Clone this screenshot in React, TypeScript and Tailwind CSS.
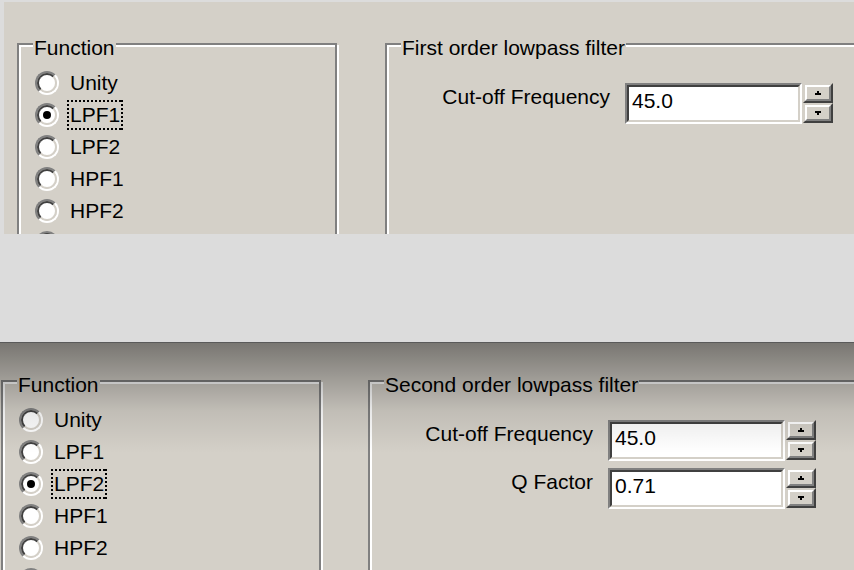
import React from "react";

const items = ["Unity", "LPF1", "LPF2", "HPF1", "HPF2", ""];

function Radio({ checked }: { checked: boolean }) {
  return (
    <div className="w-[24px] h-[24px] shrink-0 rounded-full border-2 border-t-[#808080] border-l-[#808080] border-b-white border-r-white">
      <div className="w-full h-full rounded-full border-2 border-t-[#404040] border-l-[#404040] border-b-[#d4d0c8] border-r-[#d4d0c8] bg-white flex items-center justify-center">
        {checked && <div className="w-[8px] h-[8px] rounded-full bg-black" />}
      </div>
    </div>
  );
}

function FocusRect() {
  return (
    <span className="pointer-events-none absolute inset-0">
      <span className="absolute left-0 right-0 top-0 h-[2px] bg-[repeating-linear-gradient(90deg,#000_0_2px,transparent_2px_4px)]" />
      <span className="absolute left-0 right-0 bottom-0 h-[2px] bg-[repeating-linear-gradient(90deg,#000_0_2px,transparent_2px_4px)]" />
      <span className="absolute top-0 bottom-0 left-0 w-[2px] bg-[repeating-linear-gradient(180deg,#000_0_2px,transparent_2px_4px)]" />
      <span className="absolute top-0 bottom-0 right-0 w-[2px] bg-[repeating-linear-gradient(180deg,#000_0_2px,transparent_2px_4px)]" />
    </span>
  );
}

function GroupBox({
  title,
  className,
  children,
}: {
  title: string;
  className: string;
  children: React.ReactNode;
}) {
  return (
    <div
      className={
        "relative shrink-0 border-2 border-[#808080] shadow-[inset_2px_2px_0_#fff,2px_2px_0_#fff] " +
        className
      }
    >
      <span className="absolute left-[14px] top-[-9px] bg-[#d4d0c8] px-[1px] leading-[24px] whitespace-nowrap">
        {title}
      </span>
      {children}
    </div>
  );
}

function FunctionGroup({ selected, className }: { selected: string; className: string }) {
  return (
    <GroupBox title="Function" className={className}>
      <div className="flex flex-col pt-[22px] pl-[16px]">
        {items.map((it, i) => (
          <div key={i} className="flex items-center h-[32px]">
            <Radio checked={it === selected} />
            {it && (
              <span className="relative ml-[8px] flex h-[30px] items-center px-[3px] leading-[24px]">
                {it}
                {it === selected && <FocusRect />}
              </span>
            )}
          </div>
        ))}
      </div>
    </GroupBox>
  );
}

function Arrow({ up }: { up: boolean }) {
  return (
    <svg width="6" height="4" viewBox="0 0 6 4" shapeRendering="crispEdges">
      {up ? (
        <>
          <rect x="2" y="0" width="2" height="2" fill="#000" />
          <rect x="0" y="2" width="6" height="2" fill="#000" />
        </>
      ) : (
        <>
          <rect x="0" y="0" width="6" height="2" fill="#000" />
          <rect x="2" y="2" width="2" height="2" fill="#000" />
        </>
      )}
    </svg>
  );
}

function SpinButton({ up }: { up: boolean }) {
  return (
    <div className="w-[30px] h-[20px] border-2 border-t-[#d4d0c8] border-l-[#d4d0c8] border-b-[#404040] border-r-[#404040]">
      <div className="w-full h-full border-2 border-t-white border-l-white border-b-[#808080] border-r-[#808080] bg-[#d4d0c8] flex items-center justify-center">
        <Arrow up={up} />
      </div>
    </div>
  );
}

function SpinRow({ label, value }: { label: string; value: string }) {
  return (
    <div className="flex items-start">
      <div className="w-[200px] mt-[2px] text-right leading-[24px] whitespace-nowrap">{label}</div>
      <div className="ml-[15px] w-[177px] h-[41px] border-2 border-t-[#808080] border-l-[#808080] border-b-white border-r-white">
        <div className="w-full h-full border-2 border-t-[#404040] border-l-[#404040] border-b-[#d4d0c8] border-r-[#d4d0c8] bg-white pl-[3px] pt-[2px] leading-[24px]">
          {value}
        </div>
      </div>
      <div className="ml-[1px] flex flex-col">
        <SpinButton up={true} />
        <SpinButton up={false} />
      </div>
    </div>
  );
}

export default function App() {
  return (
    <div
      className="w-[854px] h-[570px] overflow-hidden bg-[#dcdcdc] text-black text-[21px]"
      style={{ fontFamily: '"Liberation Sans", Arial, sans-serif' }}
    >
      {/* Top window */}
      <div className="h-[234px] pl-[4px] pt-[2px]">
        <div className="h-full bg-[#d4d0c8] overflow-hidden">
          <div className="flex pl-[13px] pt-[41px]">
            <FunctionGroup selected="LPF1" className="w-[320px] h-[300px]" />
            <GroupBox title="First order lowpass filter" className="ml-[48px] w-[520px] h-[300px]">
              <div className="flex flex-col pt-[38px] pl-[23px] gap-[7px]">
                <SpinRow label="Cut-off Frequency" value="45.0" />
              </div>
            </GroupBox>
          </div>
        </div>
      </div>

      {/* Middle gap */}
      <div className="h-[108px] bg-[#dcdcdc]" />
      <div className="h-[1px] bg-[#5a5a5a]" />

      {/* Bottom window */}
      <div className="relative h-[227px] bg-[#d4d0c8] overflow-hidden">
        <div className="flex pl-[1px] pt-[37px]">
          <FunctionGroup selected="LPF2" className="w-[320px] h-[300px]" />
          <GroupBox title="Second order lowpass filter" className="ml-[47px] w-[520px] h-[300px]">
            <div className="flex flex-col pt-[38px] pl-[23px] gap-[7px]">
              <SpinRow label="Cut-off Frequency" value="45.0" />
              <SpinRow label="Q Factor" value="0.71" />
            </div>
          </GroupBox>
        </div>
        <div className="pointer-events-none absolute inset-x-0 top-0 h-[110px] bg-[linear-gradient(180deg,rgba(0,0,0,0.43)_0px,rgba(0,0,0,0.24)_38px,rgba(0,0,0,0.09)_68px,rgba(0,0,0,0)_110px)]" />
      </div>
    </div>
  );
}
